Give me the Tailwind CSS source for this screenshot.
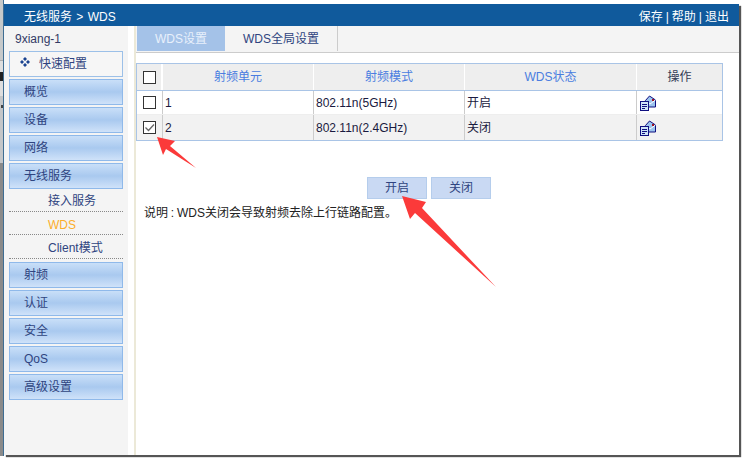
<!DOCTYPE html>
<html lang="zh">
<head>
    <meta charset="UTF-8" />
    <title>WDS</title>
    <script src="https://cdn.jsdelivr.net/npm/@tailwindcss/browser@4"></script>
</head>
<body class="bg-white">
<div class="relative w-[744px] h-[459px] overflow-hidden bg-white font-['Liberation_Sans','Noto_Sans_CJK_SC',sans-serif] text-[12px] leading-none">
    <div class="flex h-[459px]">
        <!-- left edge of the desktop behind the window -->
        <div class="w-[4px] h-[456px] flex flex-col border-r border-[#3f6d92]">
            <div class="h-[60px] bg-[#c6c9ca]"></div>
            <div class="h-[36px] bg-[#dedede] border-t border-[#aaaaaa] pt-[11px]"><div class="w-[3px] h-[9px] bg-[#222]"></div></div>
            <div class="h-[67px] bg-[#c4c6c8] pt-[9px]"><div class="w-[2px] h-[3px] ml-[1px] bg-[#444]"></div></div>
            <div class="flex-1 bg-[#8a8a8a]"></div>
        </div>

        <!-- window -->
        <div class="w-[735px] h-[451px] mt-[4px] flex flex-col bg-white shadow-[2px_2px_1px_#555]">
            <!-- header -->
            <div class="h-[22px] bg-[#105a9c] text-white flex items-center justify-between pl-[20px] pr-[10px] pt-[3px]">
                <span class="[word-spacing:1px]">无线服务 &gt; WDS</span>
                <span class="flex gap-[3px]"><span>保存</span><span>|</span><span>帮助</span><span>|</span><span>退出</span></span>
            </div>

            <div class="flex flex-1 min-h-0">
                <!-- sidebar -->
                <div class="w-[124px] bg-[#f4f4f4] px-[5px] text-[#2f4480]">
                    <div class="h-[25px] flex items-center pl-[6px] text-[#333b66]">9xiang-1</div>
                    <div class="h-[26px] border border-[#9cc0e8] bg-[#f6f6f6] flex items-center pl-[10px] gap-[9px] mb-[2px]">
                        <svg width="10" height="10" viewBox="0 0 10 10" class="-mt-[5px]" fill="#1a4390"><path d="M5 0 L7 2 L5 4 L3 2 Z M2 3 L4 5 L2 7 L0 5 Z M8 3 L10 5 L8 7 L6 5 Z M5 6 L7 8 L5 10 L3 8 Z"/></svg>
                        <span>快速配置</span>
                    </div>
                    <div class="flex flex-col gap-[2px]">
                        <div class="h-[26px] border border-[#8fb9ea] bg-gradient-to-b from-[#c9dff8] via-[#a9c9ef] to-[#cfe2f9] flex items-center pl-[14px]">概览</div>
                        <div class="h-[26px] border border-[#8fb9ea] bg-gradient-to-b from-[#c9dff8] via-[#a9c9ef] to-[#cfe2f9] flex items-center pl-[14px]">设备</div>
                        <div class="h-[26px] border border-[#8fb9ea] bg-gradient-to-b from-[#c9dff8] via-[#a9c9ef] to-[#cfe2f9] flex items-center pl-[14px]">网络</div>
                        <div class="h-[26px] border border-[#8fb9ea] bg-gradient-to-b from-[#c9dff8] via-[#a9c9ef] to-[#cfe2f9] flex items-center pl-[14px]">无线服务</div>
                    </div>
                    <div class="h-[23px] border-b border-dotted border-[#888] flex items-center pl-[39px] pt-[2px]">接入服务</div>
                    <div class="h-[23px] border-b border-dotted border-[#888] flex items-center pl-[39px] pt-[4px] text-[#fbae2c]">WDS</div>
                    <div class="h-[24px] border-b border-dotted border-[#888] flex items-center pl-[39px] pt-[2px] mb-[3px]">Client模式</div>
                    <div class="flex flex-col gap-[2px]">
                        <div class="h-[26px] border border-[#8fb9ea] bg-gradient-to-b from-[#c9dff8] via-[#a9c9ef] to-[#cfe2f9] flex items-center pl-[14px]">射频</div>
                        <div class="h-[26px] border border-[#8fb9ea] bg-gradient-to-b from-[#c9dff8] via-[#a9c9ef] to-[#cfe2f9] flex items-center pl-[14px]">认证</div>
                        <div class="h-[26px] border border-[#8fb9ea] bg-gradient-to-b from-[#c9dff8] via-[#a9c9ef] to-[#cfe2f9] flex items-center pl-[14px]">安全</div>
                        <div class="h-[26px] border border-[#8fb9ea] bg-gradient-to-b from-[#c9dff8] via-[#a9c9ef] to-[#cfe2f9] flex items-center pl-[14px]">QoS</div>
                        <div class="h-[26px] border border-[#8fb9ea] bg-gradient-to-b from-[#c9dff8] via-[#a9c9ef] to-[#cfe2f9] flex items-center pl-[14px]">高级设置</div>
                    </div>
                </div>

                <!-- splitter -->
                <div class="w-[6px] bg-white"></div>
                <div class="w-[2px] bg-[#ece9d8]"></div>

                <!-- main -->
                <div class="flex-1 flex flex-col">
                    <div class="h-[27px] bg-[#f4f4f4] border-b border-[#cccccc] flex pl-[1px]">
                        <div class="w-[88px] h-[25px] bg-[#a4c2e8] text-[#e8f0fb] flex items-center justify-center">WDS设置</div>
                        <div class="w-[113px] h-[25px] border-r border-[#cccccc] text-[#2f4480] flex items-center justify-center">WDS全局设置</div>
                    </div>

                    <div class="w-[587px] mt-[10px] border border-[#a9c4e6]">
                        <div class="grid grid-cols-[26px_151px_151px_172px_1fr] h-[27px] bg-[#eeeeee] border-b border-[#a9c4e6] items-stretch text-center">
                            <div class="flex items-center justify-center border-r-2 border-white"><span class="block w-[13px] h-[13px] border border-[#333] bg-white"></span></div>
                            <div class="flex items-center justify-center border-r border-white text-[#4a7de0]">射频单元</div>
                            <div class="flex items-center justify-center border-r border-white text-[#4a7de0]">射频模式</div>
                            <div class="flex items-center justify-center border-r border-white text-[#4a7de0]">WDS状态</div>
                            <div class="flex items-center justify-center text-[#333b55]">操作</div>
                        </div>
                        <div class="grid grid-cols-[26px_151px_151px_172px_1fr] h-[24px] bg-white border-b border-[#eeeeee] text-[#1a1a40]">
                            <div class="flex items-center justify-center border-r border-[#cccccc]"><span class="block w-[13px] h-[13px] border border-[#333] bg-white"></span></div>
                            <div class="flex items-center pl-[2px] border-r border-[#cccccc]">1</div>
                            <div class="flex items-center pl-[2px] border-r border-[#cccccc]">802.11n(5GHz)</div>
                            <div class="flex items-center pl-[2px] border-r border-[#cccccc]">开启</div>
                            <div class="flex items-center pl-[3px]">
                                <svg width="16" height="16" viewBox="0 0 16 16"><path d="M5 6 L9.5 1 L15.5 5 V12 H5 Z" fill="#9cc4ee" stroke="#101080"/><path d="M5 6 L10 9 L15.5 5" fill="none" stroke="#fff"/><rect x="12" y="4" width="2" height="2" fill="#a01020"/><rect x="0.5" y="6.5" width="8" height="9" fill="#cfe4f8" stroke="#101080"/><path d="M2 9.5H7M2 11.5H7M2 13.5H5" stroke="#101080"/></svg>
                            </div>
                        </div>
                        <div class="grid grid-cols-[26px_151px_151px_172px_1fr] h-[25px] bg-[#f2f2f2] text-[#1a1a40]">
                            <div class="flex items-center justify-center border-r border-[#cccccc]">
                                <span class="flex items-center justify-center w-[13px] h-[13px] border border-[#333] bg-white">
                                    <svg width="11" height="11" viewBox="0 0 11 11"><path d="M1.5 5.5 L4.5 8.5 L10 2.5" fill="none" stroke="#666" stroke-width="1.3"/></svg>
                                </span>
                            </div>
                            <div class="flex items-center pl-[2px] border-r border-[#cccccc]">2</div>
                            <div class="flex items-center pl-[2px] border-r border-[#cccccc]">802.11n(2.4GHz)</div>
                            <div class="flex items-center pl-[2px] border-r border-[#cccccc]">关闭</div>
                            <div class="flex items-center pl-[3px]">
                                <svg width="16" height="16" viewBox="0 0 16 16"><path d="M5 6 L9.5 1 L15.5 5 V12 H5 Z" fill="#9cc4ee" stroke="#101080"/><path d="M5 6 L10 9 L15.5 5" fill="none" stroke="#fff"/><rect x="12" y="4" width="2" height="2" fill="#a01020"/><rect x="0.5" y="6.5" width="8" height="9" fill="#cfe4f8" stroke="#101080"/><path d="M2 9.5H7M2 11.5H7M2 13.5H5" stroke="#101080"/></svg>
                            </div>
                        </div>
                    </div>

                    <div class="flex gap-[4px] mt-[36px] ml-[231px]">
                        <div class="w-[60px] h-[22px] bg-[#c9d9f3] border border-[#b5cdec] text-[#2f4480] flex items-center justify-center">开启</div>
                        <div class="w-[60px] h-[22px] bg-[#c9d9f3] border border-[#b5cdec] text-[#2f4480] flex items-center justify-center">关闭</div>
                    </div>
                    <p class="mt-[8px] ml-[8px] text-[#222] [word-spacing:-0.5px]">说明 : WDS关闭会导致射频去除上行链路配置。</p>
                </div>
            </div>
        </div>
    </div>

    <!-- annotation arrows over the screenshot -->
    <svg class="absolute left-0 top-0 pointer-events-none" width="744" height="459" viewBox="0 0 744 459">
        <polygon points="157,137 175,141 170,146 196,168 166,149 163,155" fill="#fb3a3a"/>
        <polygon points="402,196 426,202 422,208 496,287 415,213 410,219" fill="#fb3a3a"/>
    </svg>
</div>
</body>
</html>
